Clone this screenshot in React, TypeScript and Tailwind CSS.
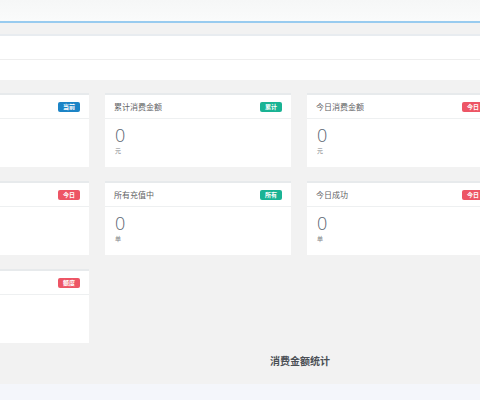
import React from 'react';

type Stat = { title: string; badge: string; tone: 'blue' | 'teal' | 'red'; value: string; unit: string };

const stats: Stat[] = [
  { title: '账户余额', badge: '当前', tone: 'blue', value: '0', unit: '元' },
  { title: '累计消费金额', badge: '累计', tone: 'teal', value: '0', unit: '元' },
  { title: '今日消费金额', badge: '今日', tone: 'red', value: '0', unit: '元' },
  { title: '今日订单', badge: '今日', tone: 'red', value: '0', unit: '单' },
  { title: '所有充值中', badge: '所有', tone: 'teal', value: '0', unit: '单' },
  { title: '今日成功', badge: '今日', tone: 'red', value: '0', unit: '单' },
  { title: '授信额度', badge: '额度', tone: 'red', value: '0', unit: '元' },
];

const badgeTone = {
  blue: 'bg-[#1c84c6]',
  teal: 'bg-[#1ab394]',
  red: 'bg-[#ed5565]',
};

const StatCard: React.FC<{ stat: Stat }> = ({ stat }) => (
  <div className="h-[74px] bg-white border-t-2 border-[#e7eaec] flex flex-col">
    <div className="h-[24px] shrink-0 flex items-center justify-between px-[9px] border-b border-[#eef0f1]">
      <span className="text-[8px] leading-none text-[#5f6265]">{stat.title}</span>
      <span
        className={`${badgeTone[stat.tone]} text-white text-[6px] leading-none font-bold rounded-[2px] w-[22px] h-[10px] flex items-center justify-center`}
      >
        {stat.badge}
      </span>
    </div>
    <div className="flex flex-col px-[10px] pt-[8px]">
      <span className="text-[18px] leading-[17px] font-light text-[#5b6673] font-['Open_Sans','Liberation_Sans',sans-serif]">
        {stat.value}
      </span>
      <span className="text-[6px] leading-none mt-[4px] text-[#7d8185]">{stat.unit}</span>
    </div>
  </div>
);

const App: React.FC = () => {
  return (
    <div className="h-[400px] w-[480px] overflow-hidden bg-[#f2f2f2] flex flex-col font-['Noto_Sans_CJK_SC','Noto_Sans',sans-serif]">
      {/* Top nav */}
      <div className="h-[23px] shrink-0 bg-gradient-to-b from-[#f6f7f7] to-[#fafbfb] border-b-2 border-[#98cbef]" />
      <div className="h-[11px] shrink-0 bg-[#f2f2f2]" />

      {/* Breadcrumb / tab strip */}
      <div className="h-[46px] shrink-0 bg-white border-t-2 border-[#e8ecf0] flex flex-col">
        <div className="h-[24px] border-b border-[#eeeeee]" />
        <div className="flex-1" />
      </div>

      {/* Stat cards */}
      <div className="pt-[13px] ml-[-97px] grid grid-cols-[186px_186px_186px] gap-x-[16px] gap-y-[14px]">
        {stats.map((s, i) => (
          <StatCard key={i} stat={s} />
        ))}
      </div>

      {/* Chart title */}
      <div className="flex-1 flex items-start pl-[270px] pt-[13px]">
        <span className="text-[10px] leading-none font-bold text-[#4a4f55]">消费金额统计</span>
      </div>

      <div className="h-[16px] shrink-0 bg-[#f4f6fb]" />
    </div>
  );
};

export default App;
